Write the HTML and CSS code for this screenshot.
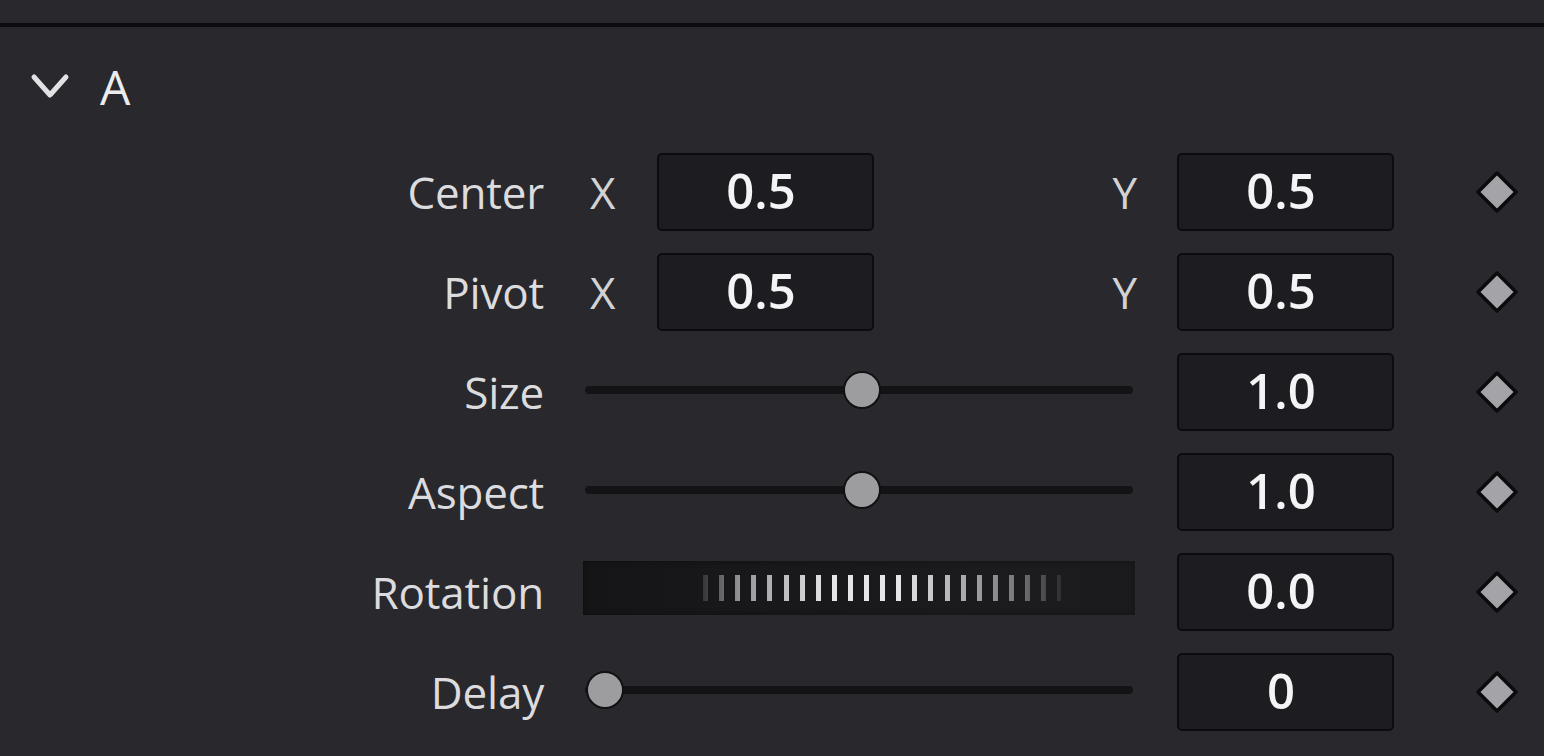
FILE: index.html
```html
<!DOCTYPE html>
<html lang="en">
<head>
<meta charset="utf-8">
<title>Inspector</title>
<link rel="stylesheet" href="styles.css">
</head>
<body>
<div class="panel">
  <div class="topbar"></div>
  <div class="header">
    <svg class="chevron" width="40" height="30" viewBox="0 0 40 30">
      <polyline points="4,5 20,23 36,5" fill="none" stroke="#e2e2e4" stroke-width="5" stroke-linecap="round" stroke-linejoin="round"/>
    </svg>
    <span class="title">A</span>
  </div>
  <div class="rows">
    <div class="row">
      <div class="label">Center</div>
      <div class="mid">
        <span class="axis axis-x">X</span>
        <div class="field">0.5</div>
        <span class="axis axis-y">Y</span>
      </div>
      <div class="field field-col">0.5</div>
      <svg class="kf" width="42" height="42" viewBox="0 0 42 42"><polygon points="21,2 40,21 21,40 2,21" fill="#a3a3a8" stroke="#0b0b0d" stroke-width="3.5" stroke-linejoin="round"/></svg>
    </div>
    <div class="row">
      <div class="label">Pivot</div>
      <div class="mid">
        <span class="axis axis-x">X</span>
        <div class="field">0.5</div>
        <span class="axis axis-y">Y</span>
      </div>
      <div class="field field-col">0.5</div>
      <svg class="kf" width="42" height="42" viewBox="0 0 42 42"><polygon points="21,2 40,21 21,40 2,21" fill="#a3a3a8" stroke="#0b0b0d" stroke-width="3.5" stroke-linejoin="round"/></svg>
    </div>
    <div class="row">
      <div class="label">Size</div>
      <div class="mid">
        <div class="slider"><div class="track"></div><div class="knob" style="left: 50.5%"></div></div>
      </div>
      <div class="field field-col">1.0</div>
      <svg class="kf" width="42" height="42" viewBox="0 0 42 42"><polygon points="21,2 40,21 21,40 2,21" fill="#a3a3a8" stroke="#0b0b0d" stroke-width="3.5" stroke-linejoin="round"/></svg>
    </div>
    <div class="row">
      <div class="label">Aspect</div>
      <div class="mid">
        <div class="slider"><div class="track"></div><div class="knob" style="left: 50.5%"></div></div>
      </div>
      <div class="field field-col">1.0</div>
      <svg class="kf" width="42" height="42" viewBox="0 0 42 42"><polygon points="21,2 40,21 21,40 2,21" fill="#a3a3a8" stroke="#0b0b0d" stroke-width="3.5" stroke-linejoin="round"/></svg>
    </div>
    <div class="row">
      <div class="label">Rotation</div>
      <div class="mid">
        <div class="dial"><div class="ticks"></div></div>
      </div>
      <div class="field field-col">0.0</div>
      <svg class="kf" width="42" height="42" viewBox="0 0 42 42"><polygon points="21,2 40,21 21,40 2,21" fill="#a3a3a8" stroke="#0b0b0d" stroke-width="3.5" stroke-linejoin="round"/></svg>
    </div>
    <div class="row">
      <div class="label">Delay</div>
      <div class="mid">
        <div class="slider"><div class="track"></div><div class="knob" style="left: 20px"></div></div>
      </div>
      <div class="field field-col">0</div>
      <svg class="kf" width="42" height="42" viewBox="0 0 42 42"><polygon points="21,2 40,21 21,40 2,21" fill="#a3a3a8" stroke="#0b0b0d" stroke-width="3.5" stroke-linejoin="round"/></svg>
    </div>
  </div>
</div>
</body>
</html>
```

FILE: styles.css
```css
html, body {
  margin: 0;
  padding: 0;
}

body {
  background: #28282d;
  font-family: "Open Sans", "DejaVu Sans", sans-serif;
  width: 1544px;
  height: 756px;
  overflow: hidden;
}

.panel {
  display: flex;
  flex-direction: column;
}

.topbar {
  height: 23px;
  border-bottom: 4px solid #0c0c10;
}

.header {
  height: 115px;
  display: flex;
  align-items: center;
  padding-left: 30px;
  padding-top: 4px;
  box-sizing: border-box;
}

.chevron {
  display: block;
}

.title {
  margin-left: 30px;
  font-size: 48px;
  font-weight: 500;
  color: #ececee;
  line-height: 1;
}

.rows {
  display: flex;
  flex-direction: column;
}

.row {
  height: 100px;
  display: flex;
  align-items: center;
}

.label {
  width: 544px;
  text-align: right;
  font-size: 44px;
  font-weight: 500;
  color: #dcdcde;
  line-height: 1.2;
  letter-spacing: -0.2px;
}

.mid {
  width: 550px;
  margin-left: 41px;
  height: 78px;
  display: flex;
  align-items: center;
}

.axis {
  font-size: 44px;
  font-weight: 500;
  color: #d2d2d5;
  line-height: 1.2;
}

.axis-x {
  width: 72px;
  padding-left: 5px;
  box-sizing: border-box;
}

.axis-y {
  margin-left: auto;
  margin-right: -2px;
}

.field {
  width: 217px;
  height: 78px;
  box-sizing: border-box;
  border: 2px solid #0c0c0f;
  border-radius: 5px;
  background: #1d1d21;
  display: flex;
  align-items: center;
  justify-content: center;
  font-size: 49px;
  font-weight: 600;
  color: #f4f4f6;
  line-height: 1;
  padding-bottom: 3px;
  padding-right: 9px;
}

.field-col {
  margin-left: 42px;
}

.kf {
  margin-left: 82px;
  display: block;
}

.slider {
  position: relative;
  width: 548px;
  height: 40px;
  margin-bottom: 4px;
}

.track {
  position: absolute;
  left: 0;
  right: 0;
  top: 16px;
  height: 8px;
  border-radius: 4px;
  background: #131316;
}

.knob {
  position: absolute;
  top: 1px;
  width: 38px;
  height: 38px;
  margin-left: -19px;
  box-sizing: border-box;
  border-radius: 50%;
  background: #9d9da0;
  border: 2px solid #111114;
}

.dial {
  width: 552px;
  height: 54px;
  margin-left: -2px;
  margin-bottom: 8px;
  background: linear-gradient(90deg, #151517 0%, #18181b 30%, #1c1c1f 80%, #1b1b1e 100%);
  box-shadow: inset 0 0 6px rgba(0, 0, 0, 0.35);
  display: flex;
  align-items: center;
}

.ticks {
  margin-left: 120px;
  width: 358px;
  height: 26px;
  background: repeating-linear-gradient(90deg, #e6e6e8 0 5px, transparent 5px 16.1px);
  -webkit-mask-image: linear-gradient(90deg, rgba(0,0,0,0.15) 0%, rgba(0,0,0,0.6) 10%, #000 35%, #000 55%, rgba(0,0,0,0.45) 88%, rgba(0,0,0,0.1) 100%);
  mask-image: linear-gradient(90deg, rgba(0,0,0,0.15) 0%, rgba(0,0,0,0.6) 10%, #000 35%, #000 55%, rgba(0,0,0,0.45) 88%, rgba(0,0,0,0.1) 100%);
}
```
